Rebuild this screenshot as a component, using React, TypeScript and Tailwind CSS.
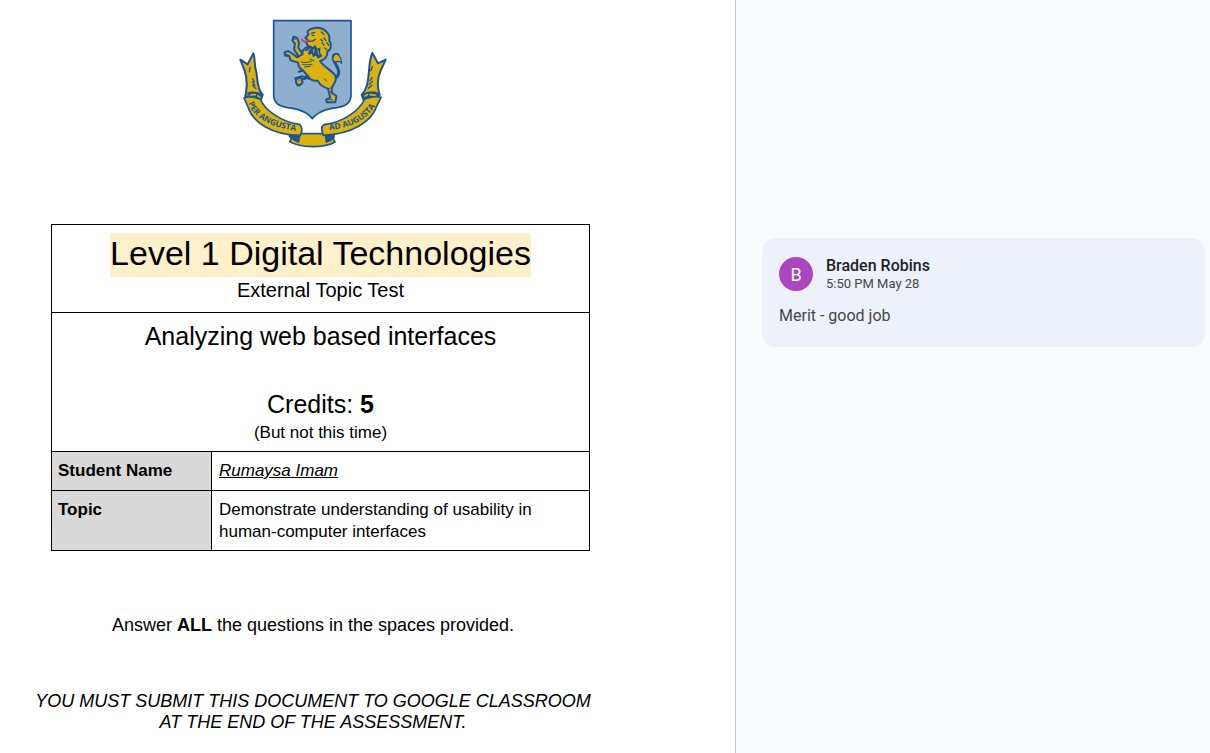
const BLUE = "#1b5496";
const GOLD = "#dcb30c";

function Crest() {
  return (
    <svg
      viewBox="0 0 498 435"
      className="h-[145px] w-[166px]"
      role="img"
      aria-label="School crest"
      strokeLinejoin="round"
      strokeLinecap="round"
    >
      <path
        d="M131 32H363V257C362 278 349 288 325 292C291 296 263 303 247 326C231 303 203 296 169 292C145 288 132 278 131 257Z"
        fill="#8fafcf"
        stroke={BLUE}
        strokeWidth="5"
      />

      {/* Lion */}
      <g fill={GOLD} stroke={BLUE} strokeWidth="6">
        <path
          d="M288 197C308 212 328 203 326 184C325 171 315 163 312 151C306 136 314 130 324 134"
          fill="none"
          strokeWidth="9"
        />
        <path d="M318 131C307 137 305 149 314 157C325 150 334 157 335 160C335 148 329 135 318 131Z" strokeWidth="4" />
        <path d="M215 128L205 114L207 98L201 83L190 80L187 92L195 101L192 118L206 139L224 137Z" />
        <path d="M206 185L222 181L232 191L226 206L211 209L214 222L202 226L196 205L218 199L240 207L258 190L243 174Z" />
        <path d="M197 204L213 204L218 217L208 227L199 220Z" />
        <path d="M226 84L235 74L232 64C242 53 264 50 278 57C293 64 302 78 298 92C307 104 303 120 292 125C294 140 282 150 270 153C281 170 304 181 314 194C323 206 315 219 307 229L304 247L319 258L316 277L291 277L288 269L301 263L294 236C281 232 269 224 263 212C250 214 242 210 236 201L219 181C209 177 205 168 204 158L182 151L177 137L166 137L163 127L175 123L184 129L202 142L218 132C214 122 224 114 235 109L229 99L235 92Z" />
      </g>
      {/* Shading under the jaw and along the mane */}
      <path
        d="M222 122L240 106L248 111L256 105L262 116L272 112L270 128L278 138L264 146L258 137L248 141L246 131L234 134L236 123Z"
        fill={BLUE}
      />
      <g fill="none" stroke={BLUE} strokeWidth="4">
        <path d="M244 70L254 67M246 76H252M238 94C246 95 252 92 256 88M274 66L282 73M282 84L288 92M276 98L282 106M291 98L296 106M284 114L290 119M272 88L277 93" />
      </g>
      <g fill="none" stroke={GOLD} strokeWidth="3">
        <path d="M232 124L240 117M252 118L251 128M263 122L266 133" />
      </g>
      <g fill="none" stroke={BLUE} strokeWidth="3">
        <path d="M214 156C225 161 235 154 244 155M218 163C227 167 236 162 246 164M224 171L240 169M240 148L252 152M202 208L208 212M163 132L174 134M191 88L199 87M296 269L308 269M290 237L302 234M284 207L290 214" />
      </g>
      <path d="M216 89C220 97 229 96 237 92" fill="none" stroke="#cf3e4c" strokeWidth="6" />

      {/* Ribbon tails */}
      <g fill={GOLD} stroke={BLUE} strokeWidth="6">
        <path d="M31 149L53 163L70 130C77 150 72 165 78 182C84 206 79 232 97 253L91 267L46 259C52 232 52 207 44 182Z" />
        <path d="M427 129L444 160L467 149L451 184C441 208 442 232 449 255L409 265L396 253C414 235 414 208 417 183C418 164 420 146 427 129Z" />
        <path d="M54 251C66 242 84 249 98 255L93 269L66 263Z" fill={BLUE} />
        <path d="M443 251C426 242 408 249 395 255L400 269L433 264Z" fill={BLUE} />
      </g>
      <g fill="none" stroke={BLUE} strokeWidth="4">
        <path d="M73 216L68 206M75 226L67 216M78 236L68 226M60 172L58 186" />
        <path d="M422 182L427 170M420 212L427 203M418 224L427 214M415 235L426 226" />
      </g>
      <g fill="none" stroke={GOLD} strokeWidth="5">
        <path d="M62 255L76 254M84 258L90 262M405 258L412 254M420 254L436 256" />
      </g>

      {/* Lower fold of the ribbon */}
      <g fill={GOLD} stroke={BLUE} strokeWidth="5">
        <path d="M202 371H291L312 376L310 387L315 396C285 414 211 415 179 395L184 386L178 377Z" />
        <path d="M180 377C191 370 200 373 209 374L206 396L192 390Z" fill={BLUE} />
        <path d="M312 377C302 371 295 373 287 375L289 396L303 390Z" fill={BLUE} />
        <path d="M42 264C56 257 73 261 91 267C105 303 157 337 209 343C218 351 218 361 211 376C126 375 69 338 54 291Z" />
        <path d="M453 262C439 257 421 261 404 267C388 303 338 337 286 343C274 346 272 354 280 376C367 372 426 334 440 289Z" />
      </g>
      <path id="motto-left" d="M54 280C74 327 126 355 210 364" fill="none" />
      <path id="motto-right" d="M298 361C374 351 422 323 446 268" fill="none" />
      <g
        fill={BLUE}
        className="font-['Open_Sans',sans-serif] text-[25px] font-bold"
        stroke="none"
      >
        <text>
          <textPath href="#motto-left">PER ANGUSTA</textPath>
        </text>
        <text>
          <textPath href="#motto-right">AD AUGUSTA</textPath>
        </text>
      </g>
    </svg>
  );
}

function CoverTable() {
  return (
    <table className="mt-[69px] ml-[51px] w-[539px] table-fixed border-collapse text-[17px] leading-[22px]">
      <colgroup>
        <col className="w-[160px]" />
        <col />
      </colgroup>
      <tbody>
        <tr>
          <td colSpan={2} className="h-[88px] border border-black p-0 text-center align-top">
            <h1 className="mt-2 text-[34px] leading-[40px]">
              <span className="inline-block bg-[#fff0cc] pb-1">Level 1 Digital Technologies</span>
            </h1>
            <p className="text-[20px] leading-[26px]">External Topic Test</p>
          </td>
        </tr>
        <tr>
          <td colSpan={2} className="h-[139px] border border-black p-0 text-center align-top">
            <h2 className="mt-1.5 text-[25px] leading-[34px]">Analyzing web based interfaces</h2>
            <p className="mt-[34px] text-[25px] leading-[34px]">
              Credits: <b>5</b>
            </p>
            <p className="leading-6">(But not this time)</p>
          </td>
        </tr>
        <tr>
          <th scope="row" className="h-[39px] border border-black bg-[#d9d9d9] px-1.5 py-2 text-left align-top font-bold">
            Student Name
          </th>
          <td className="border border-black px-[7px] py-2 align-top italic underline">Rumaysa Imam</td>
        </tr>
        <tr>
          <th scope="row" className="border border-black bg-[#d9d9d9] px-1.5 pt-2 pb-[7px] text-left align-top font-bold">
            Topic
          </th>
          <td className="border border-black px-[7px] pt-2 pb-[7px] align-top">
            Demonstrate understanding of usability in human-computer interfaces
          </td>
        </tr>
      </tbody>
    </table>
  );
}

function Comment() {
  return (
    <article className="rounded-[14px] bg-[#ecf1fa] px-[17px] pt-[18px] pb-5 font-[Roboto,sans-serif]">
      <header className="flex items-center gap-[13px]">
        <div className="flex size-[34px] items-center justify-center rounded-full bg-[#ab47bc] text-[18px] text-white">
          B
        </div>
        <div>
          <h3 className="text-[16px] leading-5 font-medium text-[#1f1f1f]">Braden Robins</h3>
          <p className="text-[13px] leading-4 text-[#444746]">5:50 PM May 28</p>
        </div>
      </header>
      <p className="mt-[13px] text-[16px] leading-[22px] text-[#444746]">Merit - good job</p>
    </article>
  );
}

export default function App() {
  return (
    <div className="grid min-h-screen grid-cols-[736fr_474fr] bg-white">
      <main className="border-r border-[#c7c7c7] pt-2.5 font-['Liberation_Sans',Arial,sans-serif] text-black">
        <div className="max-w-[626px]">
          <div className="flex justify-center">
            <Crest />
          </div>
          <CoverTable />
          <p className="mt-[62px] text-center text-[18px] leading-6">
            Answer <b>ALL</b> the questions in the spaces provided.
          </p>
          <p className="mt-[54px] text-center text-[18px] leading-[21px] italic">
            YOU MUST SUBMIT THIS DOCUMENT TO GOOGLE CLASSROOM
            <br />
            AT THE END OF THE ASSESSMENT.
          </p>
        </div>
      </main>
      <aside aria-label="Comments" className="bg-[#fafbfd] pt-[238px] pr-[5px] pl-[26px]">
        <Comment />
      </aside>
    </div>
  );
}
